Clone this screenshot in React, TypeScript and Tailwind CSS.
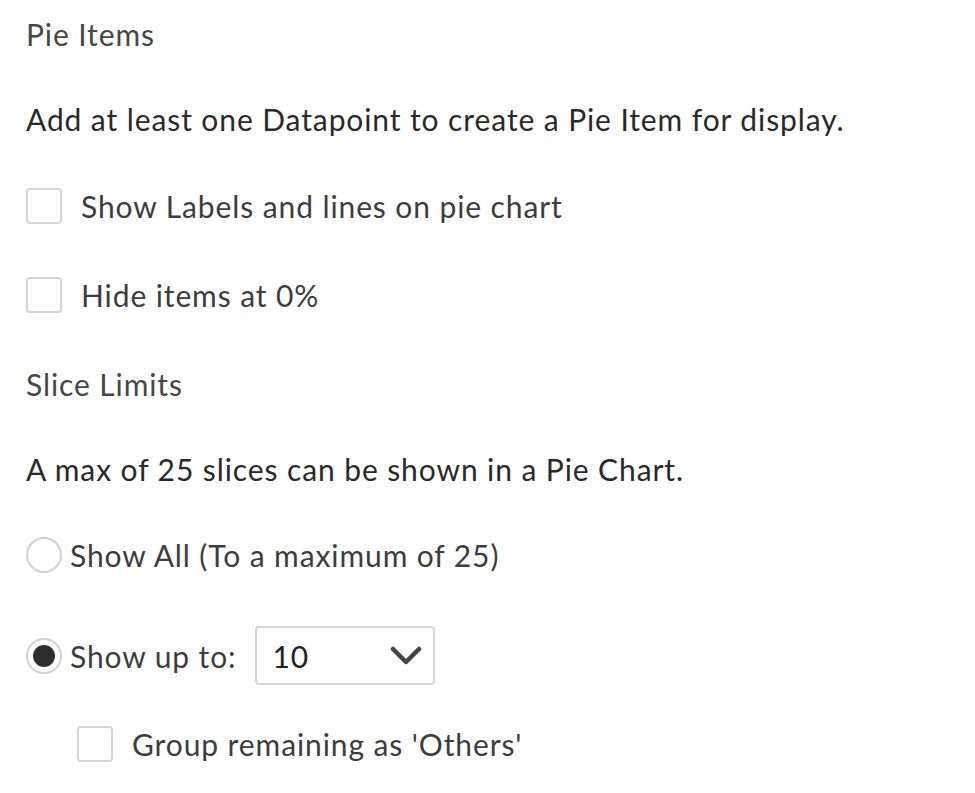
function Checkbox() {
  return <span className="block h-[36px] w-[36px] shrink-0 rounded-[4px] border-2 border-[#d6d6d6] bg-white" />;
}

function Radio({ checked }: { checked?: boolean }) {
  return (
    <span className="flex h-[36px] w-[36px] shrink-0 items-center justify-center rounded-full border-2 border-[#d2d2d2] bg-white">
      {checked && <span className="block h-[22px] w-[22px] rounded-full bg-[#2e2e2e]" />}
    </span>
  );
}

export default function App() {
  return (
    <div
      className="min-h-screen bg-white pl-[26px] pt-[17px] text-[30px] leading-[34px] tracking-[0.9px] text-[#333]"
      style={{ fontFamily: "Lato, 'Open Sans', sans-serif" }}
    >
      <div className="text-[#474747]">Pie Items</div>
      <p className="mt-[51px] text-[#2a2a2a]">Add at least one Datapoint to create a Pie Item for display.</p>

      <label className="mt-[52px] flex items-center gap-[19px] text-[#3d3d3d]">
        <Checkbox />
        <span>Show Labels and lines on pie chart</span>
      </label>
      <label className="mt-[53px] flex items-center gap-[19px] text-[#3d3d3d]">
        <Checkbox />
        <span>Hide items at 0%</span>
      </label>

      <div className="mt-[54px] text-[#474747]">Slice Limits</div>
      <p className="mt-[51px] text-[#2a2a2a]">A max of 25 slices can be shown in a Pie Chart.</p>

      <label className="mt-[51px] flex items-center gap-[8px] text-[#3d3d3d]">
        <Radio />
        <span>Show All (To a maximum of 25)</span>
      </label>

      <div className="mt-[53px] flex items-center text-[#3d3d3d]">
        <Radio checked />
        <span className="ml-[8px]">Show up to:</span>
        <div className="ml-[18px] flex h-[59px] w-[180px] items-center justify-between rounded-[4px] border-2 border-[#d6d6d6] pl-[16px] pr-[11px] text-[#222]">
          <span>10</span>
          <svg width="32" height="20" viewBox="0 0 32 20" fill="none">
            <path d="M3 3 L16 16 L29 3" stroke="#444" strokeWidth="4.5" strokeLinecap="round" strokeLinejoin="round" />
          </svg>
        </div>
      </div>

      <label className="ml-[51px] mt-[41px] flex items-center gap-[19px] text-[#3d3d3d]">
        <Checkbox />
        <span>Group remaining as 'Others'</span>
      </label>
    </div>
  );
}
